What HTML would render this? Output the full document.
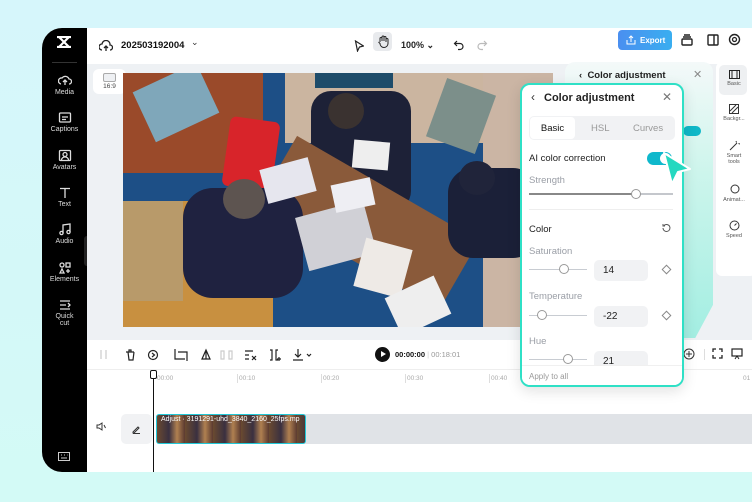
<!DOCTYPE html>
<html><head><meta charset="utf-8"><style>
*{box-sizing:border-box;margin:0;padding:0}
body{width:752px;height:502px;overflow:hidden;background:linear-gradient(180deg,#d6f6fb,#d3faf6);font-family:"Liberation Sans",sans-serif;position:relative}
.abs{position:absolute}
.app{left:42px;top:28px;width:720px;height:444px;background:#fff;border-radius:20px 0 0 20px;overflow:hidden}
.side{left:0;top:0;width:45px;height:444px;background:#000;color:#ddd;font-size:7px;text-align:center}
.side .it{position:absolute;left:0;width:45px}
.side svg{display:block;margin:0 auto 2px}
.top{left:45px;top:0;right:0;height:36px;background:#fff}
.canvas{left:45px;top:36px;right:0;height:276px;background:#eef1f4}
.tb{left:45px;top:312px;right:0;height:30px;background:#fff;border-bottom:1px solid #eee}
.tl{left:45px;top:342px;right:0;height:102px;background:#fff}
.ico{stroke:#333;fill:none;stroke-width:1.3}
.panel{left:520px;top:83px;width:164px;height:304px;background:#fff;border:2px solid #2fe0c6;border-radius:10px;overflow:hidden;box-shadow:0 4px 14px rgba(0,0,0,.12)}
.lbl{color:#9a9ea6;font-size:9.5px;position:absolute;left:7px}
.val{position:absolute;left:72px;width:54px;height:21px;background:#f1f2f4;border-radius:5px;font-size:10px;color:#222;padding:5px 0 0 9px}
.trk{position:absolute;left:7px;width:58px;height:1px;background:#c8ccd2}
.knob{position:absolute;width:10px;height:10px;border-radius:50%;background:#fff;border:1px solid #999}
.dia{position:absolute;left:141px;width:7px;height:7px;border:1px solid #888;transform:rotate(45deg)}
</style></head><body>
<div class="abs app">
 <div class="abs side">
  <svg class="abs" style="left:14px;top:8px" width="16" height="12" viewBox="0 0 16 12"><path d="M1 1h14M1 11h14M3 1l10 10M13 1L3 11" stroke="#fff" stroke-width="2.2" fill="none"/></svg>
  <div class="abs" style="left:10px;top:34px;width:25px;height:1px;background:#333"></div>
  <div class="it" style="top:46px"><svg width="14" height="13" class="ico" style="stroke:#ddd"><path d="M3 10a3 3 0 0 1 1-6 4 4 0 0 1 7 1 2.5 2.5 0 0 1 0 5M7 11V6M5 8l2-2 2 2"/></svg>Media</div>
  <div class="it" style="top:83px"><svg width="14" height="13" class="ico" style="stroke:#ddd"><rect x="1.5" y="2" width="11" height="9" rx="1"/><path d="M4 6h6M4 8.5h4"/></svg>Captions</div>
  <div class="it" style="top:121px"><svg width="14" height="13" class="ico" style="stroke:#ddd"><rect x="1.5" y="1.5" width="11" height="10" rx="1"/><circle cx="7" cy="5.5" r="2"/><path d="M3.5 11a3.5 3 0 0 1 7 0"/></svg>Avatars</div>
  <div class="it" style="top:158px"><svg width="14" height="13" class="ico" style="stroke:#ddd"><path d="M2 2.5h10M7 2.5V12"/></svg>Text</div>
  <div class="it" style="top:195px"><svg width="14" height="13" class="ico" style="stroke:#ddd"><path d="M5 10V2l7-1v8"/><circle cx="3.5" cy="10" r="1.6"/><circle cx="10.5" cy="9" r="1.6"/></svg>Audio</div>
  <div class="it" style="top:233px"><svg width="14" height="13" class="ico" style="stroke:#ddd"><circle cx="4" cy="4" r="2"/><rect x="8" y="2" width="4" height="4"/><path d="M2 12l2-4 2 4zM10 8v4M8 10h4"/></svg>Elements</div>
  <div class="it" style="top:270px"><svg width="14" height="13" class="ico" style="stroke:#ddd"><path d="M2 3h10M2 7h6M2 11h10M10 5l2 2-2 2"/></svg>Quick<br>cut</div>
  <svg class="abs" style="left:16px;top:424px" width="12" height="10"><rect x="0.5" y="0.5" width="11" height="8" fill="none" stroke="#ccc"/><path d="M3 6h6M3 3h1M6 3h1M9 3h0.5" stroke="#ccc"/></svg>
  <div class="abs" style="left:42px;top:208px;width:6px;height:30px;background:#222;border-radius:3px"></div>
 </div>
 <div class="abs top">
  <svg class="abs" style="left:12px;top:12px" width="14" height="12"><path d="M3 10a3 3 0 0 1 0-6 4 4 0 0 1 8 1 2.5 2.5 0 0 1 0 5M7 11V6M5 8l2-2 2 2" stroke="#222" fill="none" stroke-width="1.3"/></svg>
  <div class="abs" style="left:34px;top:12px;font-size:9.5px;font-weight:bold;color:#111">202503192004</div>
  <div class="abs" style="left:104px;top:9px;font-size:9px;color:#333">⌄</div>
  <svg class="abs" style="left:267px;top:12px" width="10" height="12"><path d="M1.5 1l8 5-4 1-2 4z" stroke="#222" fill="none" stroke-width="1.2"/></svg>
  <div class="abs" style="left:286px;top:4px;width:19px;height:19px;background:#e8eaed;border-radius:4px"></div>
  <svg class="abs" style="left:290px;top:7px" width="12" height="13"><path d="M3 7V3.5a1 1 0 0 1 2 0V6M5 6V2a1 1 0 0 1 2 0v4M7 6V2.5a1 1 0 0 1 2 0V7M9 7V4.5a1 1 0 0 1 2 0v4a4 4 0 0 1-8 0L1.5 7" stroke="#222" fill="none" stroke-width="1"/></svg>
  <div class="abs" style="left:314px;top:12px;font-size:9px;font-weight:bold;color:#222">100% ⌄</div>
  <svg class="abs" style="left:366px;top:11px" width="12" height="12"><path d="M4 2L1.5 4.5 4 7M2 4.5h5a3 3 0 0 1 0 6H5" stroke="#222" fill="none" stroke-width="1.2"/></svg>
  <svg class="abs" style="left:389px;top:11px" width="12" height="12"><path d="M8 2l2.5 2.5L8 7M10 4.5H5a3 3 0 0 0 0 6h2" stroke="#bbb" fill="none" stroke-width="1.2"/></svg>
  <div class="abs" style="left:531px;top:2px;width:54px;height:20px;border-radius:4px;background:linear-gradient(90deg,#4a8ff0,#3aaef0);color:#fff;font-size:8px;font-weight:bold;padding:6px 0 0 22px">Export</div>
  <svg class="abs" style="left:539px;top:7px" width="10" height="10"><path d="M5 7V1M3 3l2-2 2 2M1 5v4h8V5" stroke="#fff" fill="none"/></svg>
  <svg class="abs" style="left:594px;top:6px" width="12" height="12"><rect x="1" y="5" width="10" height="6" rx="1" stroke="#222" fill="none" stroke-width="1.4"/><path d="M2 3h8M3 1h6" stroke="#222" stroke-width="1.4"/></svg>
  <svg class="abs" style="left:620px;top:6px" width="12" height="12"><rect x="1" y="1" width="10" height="10" rx="1" stroke="#222" fill="none" stroke-width="1.4"/><path d="M7 1v10" stroke="#222" stroke-width="1.4"/></svg>
  <svg class="abs" style="left:641px;top:5px" width="13" height="13"><circle cx="6.5" cy="6.5" r="5" stroke="#222" fill="none" stroke-width="1.4"/><circle cx="6.5" cy="6.5" r="2" stroke="#222" fill="none" stroke-width="1.3"/></svg>
 </div>
 <div class="abs canvas">
  <div class="abs" style="left:6px;top:5px;width:33px;height:25px;background:#fff;border-radius:6px;font-size:6.5px;color:#444;text-align:center;padding-top:14px">16:9
   <div class="abs" style="left:10px;top:4px;width:13px;height:9px;border:1px solid #aaa;border-radius:2px;background:#eef0f3"></div></div>
  <div class="abs" style="left:36px;top:9px;width:430px;height:254px;overflow:hidden;background:#1d4f86">
   <div class="abs" style="left:0;top:0;width:140px;height:100px;background:#9a4a2a;border-radius:0 0 40px 0"></div>
   <div class="abs" style="left:18px;top:2px;width:70px;height:55px;background:#7fa7ba;transform:rotate(-25deg)"></div>
   <div class="abs" style="left:162px;top:0;width:263px;height:70px;background:#cbb5a0"></div>
   <div class="abs" style="left:360px;top:0;width:70px;height:254px;background:#cbb5a4"></div>
   <div class="abs" style="left:192px;top:0;width:78px;height:15px;background:#1e4c6a"></div>
   <div class="abs" style="left:312px;top:12px;width:52px;height:62px;background:#7c8f8a;transform:rotate(20deg)"></div>
   <div class="abs" style="left:103px;top:46px;width:50px;height:70px;background:#d8242a;border-radius:6px;transform:rotate(8deg)"></div>
   <div class="abs" style="left:188px;top:18px;width:100px;height:120px;background:#1d2137;border-radius:20px"></div>
   <div class="abs" style="left:205px;top:20px;width:36px;height:36px;background:#3a3230;border-radius:50%"></div>
   <div class="abs" style="left:140px;top:110px;width:210px;height:80px;background:#8a5a3a;transform:rotate(30deg)"></div>
   <div class="abs" style="left:0;top:128px;width:150px;height:126px;background:#c89040;border-radius:0 40px 0 0"></div>
   <div class="abs" style="left:0;top:128px;width:60px;height:100px;background:#b89a6a"></div>
   <div class="abs" style="left:60px;top:115px;width:120px;height:110px;background:#1f2240;border-radius:30px"></div>
   <div class="abs" style="left:100px;top:106px;width:42px;height:40px;background:#5d5450;border-radius:50%"></div>
   <div class="abs" style="left:178px;top:135px;width:70px;height:55px;background:#d0d0d6;transform:rotate(-15deg)"></div>
   <div class="abs" style="left:210px;top:108px;width:40px;height:28px;background:#eeeef3;transform:rotate(-12deg)"></div>
   <div class="abs" style="left:140px;top:90px;width:50px;height:35px;background:#e6e6ee;transform:rotate(-15deg)"></div>
   <div class="abs" style="left:325px;top:95px;width:90px;height:90px;background:#1b2038;border-radius:25px"></div>
   <div class="abs" style="left:336px;top:88px;width:36px;height:34px;background:#20243a;border-radius:50%"></div>
   <div class="abs" style="left:236px;top:170px;width:48px;height:50px;background:#eeeae6;transform:rotate(15deg)"></div>
   <div class="abs" style="left:268px;top:212px;width:54px;height:42px;background:#eee;transform:rotate(-25deg)"></div>
   <div class="abs" style="left:230px;top:68px;width:36px;height:28px;background:#eee;transform:rotate(5deg)"></div>
  </div>
  <div class="abs" style="left:478px;top:-2px;width:148px;height:276px;border-radius:10px;background:linear-gradient(180deg,#f4f9f9 0,#cdf5ec 40%,#a3eee2 100%);clip-path:polygon(0 0,100% 0,100% 88%,88% 100%,0 100%)">
   <div class="abs" style="left:14px;top:8px;font-size:9.5px;font-weight:bold;color:#222">‹ &nbsp;Color adjustment</div>
   <div class="abs" style="left:128px;top:6px;font-size:11px;color:#888">✕</div>
   <div class="abs" style="left:118px;top:64px;width:18px;height:10px;border-radius:5px;background:#10b8c8"></div>
  </div>
  <div class="abs" style="left:629px;top:-2px;width:40px;height:214px;background:#fff;border-radius:6px;font-size:5.5px;color:#555;text-align:center">
   <div class="abs" style="left:3px;top:3px;width:28px;height:30px;background:#eef0f2;border-radius:5px"></div>
   <div class="abs" style="left:0;width:36px;top:8px"><svg width="11" height="9"><rect x="0.5" y="0.5" width="10" height="8" fill="none" stroke="#222"/><path d="M3 .5v8M8 .5v8" stroke="#222"/></svg><br>Basic</div>
   <div class="abs" style="left:0;width:36px;top:42px"><svg width="10" height="10"><rect x="0.5" y="0.5" width="9" height="9" fill="none" stroke="#333"/><path d="M1 7l6-6M3 9l6-6" stroke="#333"/></svg><br>Backgr...</div>
   <div class="abs" style="left:0;width:36px;top:78px"><svg width="11" height="11"><path d="M1 10l7-7M7 1l.5 1.5M9.5 3.5L11 4" stroke="#333"/></svg><br>Smart<br>tools</div>
   <div class="abs" style="left:0;width:36px;top:122px"><svg width="11" height="11"><circle cx="6" cy="5" r="4" fill="none" stroke="#333"/></svg><br>Animat...</div>
   <div class="abs" style="left:0;width:36px;top:158px"><svg width="11" height="11"><circle cx="5.5" cy="5.5" r="4.5" fill="none" stroke="#333"/><path d="M5.5 5.5l2-2" stroke="#333"/></svg><br>Speed</div>
  </div>
 </div>
 <div class="abs tb">
  <svg class="abs" width="270" height="14" style="left:12px;top:8px" fill="none" stroke="#222" stroke-width="1.2">
   <path d="M2 2v9M7 2v9" stroke="#ccc"/>
   <path d="M27 4h8M29 4l1 8h4l1-8M30 4V2h2v2"/>
   <circle cx="54" cy="7" r="4.5"/><path d="M53 5l2.5 2L53 9"/>
   <path d="M76 1v10h10M79 4h9v9"/>
   <path d="M103 11l4-9 4 9zM107 2v9"/>
   <path d="M122 3h3v8h-3zM130 3h3v8h-3z" stroke="#ccc"/>
   <path d="M146 3h8M146 7h4M146 11h4M153 8l4 4M157 8l-4 4"/>
   <path d="M171 2h2v10h-2M179 2h-2v10h2M180 9v4M178 11h4"/>
   <path d="M199 1v8M196 6l3 3 3-3M194 12h10M208 6l2 2 2-2" />
  </svg>
  <div class="abs" style="left:288px;top:7px;width:15px;height:15px;border-radius:50%;background:#111"></div>
  <div class="abs" style="left:294px;top:11px;width:0;height:0;border-left:5px solid #fff;border-top:3.5px solid transparent;border-bottom:3.5px solid transparent"></div>
  <div class="abs" style="left:308px;top:10px;font-size:7.5px;font-weight:bold;color:#111">00:00:00 <span style="color:#ccc;font-weight:normal">|</span> <span style="color:#999;font-weight:normal">00:18:01</span></div>
  <svg class="abs" style="left:596px;top:8px" width="12" height="12"><circle cx="6" cy="6" r="5" fill="none" stroke="#333"/><path d="M6 3v6M3 6h6" stroke="#333"/></svg>
  <div class="abs" style="left:617px;top:9px;width:1px;height:11px;background:#ddd"></div>
  <svg class="abs" style="left:625px;top:8px" width="11" height="11"><path d="M1 4V1h3M7 1h3v3M10 7v3H7M4 10H1V7" fill="none" stroke="#222" stroke-width="1.3"/></svg>
  <svg class="abs" style="left:644px;top:8px" width="12" height="12"><rect x="1" y="1" width="10" height="7" fill="none" stroke="#222" stroke-width="1.2"/><path d="M4 11l2-3 2 3" fill="none" stroke="#222"/></svg>
 </div>
 <div class="abs tl">
  <div class="abs" style="left:0;top:0;right:0;height:14px;font-size:6.5px;color:#aaa">
   <span class="abs" style="left:70px;top:5px">00:00</span><span class="abs" style="left:152px;top:5px">00:10</span><span class="abs" style="left:236px;top:5px">00:20</span><span class="abs" style="left:320px;top:5px">00:30</span><span class="abs" style="left:404px;top:5px">00:40</span><span class="abs" style="left:656px;top:5px">01</span>
   <div class="abs" style="left:150px;top:4px;width:1px;height:9px;background:#ddd"></div><div class="abs" style="left:234px;top:4px;width:1px;height:9px;background:#ddd"></div><div class="abs" style="left:318px;top:4px;width:1px;height:9px;background:#ddd"></div><div class="abs" style="left:402px;top:4px;width:1px;height:9px;background:#ddd"></div>
  </div>
  <div class="abs" style="left:66px;top:0;width:1px;height:102px;background:#111"></div>
  <div class="abs" style="left:63px;top:0;width:7px;height:9px;border:1px solid #111;border-radius:2px;background:#fff"></div>
  <svg class="abs" style="left:9px;top:52px" width="10" height="9"><path d="M1 3h2l3-2v7L3 6H1z M8 3l1.5 3" fill="none" stroke="#333"/></svg>
  <div class="abs" style="left:34px;top:44px;width:31px;height:30px;background:#f1f2f4;border-radius:5px"></div>
  <svg class="abs" style="left:44px;top:54px" width="10" height="10"><path d="M2 8l5-5 1 1-5 5H2zM2 9.5h7" fill="none" stroke="#333"/></svg>
  <div class="abs" style="left:215px;top:44px;right:0;height:30px;background:#e0e3e7"></div>
  <div class="abs" style="left:69px;top:44px;width:150px;height:30px;border:1.5px solid #21c8d8;border-radius:3px;background:repeating-linear-gradient(90deg,#6a4a30 0,#3a3040 12px,#b08050 20px,#5a3a30 28px);overflow:hidden">
   <div style="font-size:7px;color:#fff;padding:1px 4px;white-space:nowrap">Adjust · 3191291-uhd_3840_2160_25fps.mp</div></div>
 </div>
</div>
<div class="abs panel">
 <div class="abs" style="left:9px;top:5px;font-size:12px;color:#333">‹</div>
 <div class="abs" style="left:22px;top:7px;font-size:11px;font-weight:bold;color:#222">Color adjustment</div>
 <div class="abs" style="left:140px;top:5px;font-size:12px;color:#777">✕</div>
 <div class="abs" style="left:7px;top:31px;width:146px;height:24px;background:#f1f2f4;border-radius:5px;font-size:9.5px;color:#999">
  <div class="abs" style="left:1px;top:1px;width:45px;height:22px;background:#fff;border-radius:4px;color:#111;text-align:center;padding-top:6px">Basic</div>
  <span class="abs" style="left:62px;top:7px">HSL</span><span class="abs" style="left:104px;top:7px">Curves</span></div>
 <div class="abs" style="left:7px;top:68px;font-size:9.5px;color:#222">AI color correction</div>
 <div class="abs" style="left:125px;top:67px;width:25px;height:13px;border-radius:7px;background:#0fb8cc"><div class="abs" style="left:13px;top:1px;width:11px;height:11px;border-radius:50%;background:#fff"></div></div>
 <div class="lbl" style="top:90px">Strength</div>
 <div class="abs" style="left:7px;top:108px;width:144px;height:1.5px;background:#c4c7cc"></div>
 <div class="abs" style="left:7px;top:108px;width:107px;height:1.5px;background:#888"></div>
 <div class="knob" style="left:109px;top:104px"></div>
 <div class="abs" style="left:7px;top:124px;width:144px;height:1px;background:#eee"></div>
 <div class="abs" style="left:7px;top:139px;font-size:9.5px;color:#222">Color</div>
 <svg class="abs" style="left:139px;top:138px" width="10" height="10"><path d="M2 5a3.5 3.5 0 1 0 1-2.5M2 1v2h2" fill="none" stroke="#555"/></svg>
 <div class="lbl" style="top:161px">Saturation</div>
 <div class="trk" style="top:184px"></div><div class="knob" style="left:37px;top:179px"></div>
 <div class="val" style="top:175px">14</div><div class="dia" style="top:181px"></div>
 <div class="lbl" style="top:206px">Temperature</div>
 <div class="trk" style="top:230px"></div><div class="knob" style="left:15px;top:225px"></div>
 <div class="val" style="top:221px">-22</div><div class="dia" style="top:227px"></div>
 <div class="lbl" style="top:251px">Hue</div>
 <div class="trk" style="top:274px"></div><div class="knob" style="left:41px;top:269px"></div>
 <div class="val" style="top:266px">21</div>
 <div class="abs" style="left:0;top:280px;width:164px;height:24px;background:#fff;border-top:1px solid #f0f0f0"></div>
 <div class="abs" style="left:7px;top:287px;font-size:8px;color:#999">Apply to all</div>
</div>
<svg class="abs" style="left:660px;top:150px" width="34" height="40"><path d="M4 3l26 16-12 3-6 12z" fill="#25d8c0" stroke="#fff" stroke-width="2" stroke-linejoin="round"/></svg>
</body></html>
